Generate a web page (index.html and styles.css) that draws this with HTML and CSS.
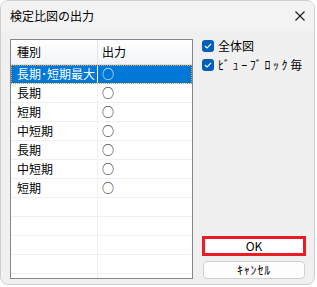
FILE: index.html
```html
<!DOCTYPE html>
<html>
<head>
    <meta charset="utf-8">
    <title>検定比図の出力</title>
    <link rel="stylesheet" href="styles.css">
</head>
<body>
    <div class="dialog">
        <div class="dialog-title">
            <span>検定比図の出力</span>
            <svg class="close" width="10" height="10" viewBox="0 0 10 10"><path d="M0.5 0.5L9.5 9.5M9.5 0.5L0.5 9.5" stroke="#1a1a1a" stroke-width="1.1"/></svg>
        </div>
        <div class="dialog-body">
            <div class="list">
                <div class="list-head">
                    <div class="col1">種別</div>
                    <div class="col2">出力</div>
                </div>
                <div class="list-rows">
                    <div class="row selected"><div class="col1">長期･短期最大</div><div class="col2">○</div></div>
                    <div class="row"><div class="col1">長期</div><div class="col2">○</div></div>
                    <div class="row"><div class="col1">短期</div><div class="col2">○</div></div>
                    <div class="row"><div class="col1">中短期</div><div class="col2">○</div></div>
                    <div class="row"><div class="col1">長期</div><div class="col2">○</div></div>
                    <div class="row"><div class="col1">中短期</div><div class="col2">○</div></div>
                    <div class="row"><div class="col1">短期</div><div class="col2">○</div></div>
                    <div class="row"><div class="col1"></div><div class="col2"></div></div>
                    <div class="row"><div class="col1"></div><div class="col2"></div></div>
                    <div class="row"><div class="col1"></div><div class="col2"></div></div>
                    <div class="row"><div class="col1"></div><div class="col2"></div></div>
                    <div class="row"><div class="col1"></div><div class="col2"></div></div>
                </div>
            </div>
            <div class="side">
                <label class="check"><span class="box"><svg width="8" height="6" viewBox="0 0 8 6"><path d="M0.8 3L3 5L7.2 0.8" fill="none" stroke="#fff" stroke-width="1.1"/></svg></span>全体図</label>
                <label class="check"><span class="box"><svg width="8" height="6" viewBox="0 0 8 6"><path d="M0.8 3L3 5L7.2 0.8" fill="none" stroke="#fff" stroke-width="1.1"/></svg></span><span class="kana">ﾋﾞｭｰﾌﾞﾛｯｸ</span>毎</label>
                <div class="buttons">
                    <button class="btn btn-ok">OK</button>
                    <button class="btn"><span class="kana-btn">ｷｬﾝｾﾙ</span></button>
                </div>
            </div>
        </div>
    </div>
</body>
</html>
```
FILE: styles.css
```css
* {
    margin: 0;
    padding: 0;
    box-sizing: border-box;
}

body {
    background: #ffffff;
    font-family: "Noto Sans CJK JP", "Liberation Sans", sans-serif;
    font-size: 12px;
    color: #000000;
}

.dialog {
    width: 315px;
    height: 285px;
    border: 1px solid #cfcfcf;
    border-radius: 8px;
    background: #f0f0f0;
    overflow: hidden;
    display: flex;
    flex-direction: column;
}

.dialog-title {
    flex-shrink: 0;
    height: 30px;
    background: #f3f3f3;
    display: flex;
    align-items: center;
    justify-content: space-between;
    padding: 0 9px 0 9px;
    line-height: 16px;
}

.dialog-title .close {
    margin-top: -1px;
}

.dialog-body {
    flex: 1;
    min-height: 0;
    display: flex;
    padding: 8px 8px 5px 9px;
    gap: 9px;
}

.list {
    width: 184px;
    border: 1px solid #828790;
    background: #ffffff;
    overflow: hidden;
}

.list-head {
    height: 25px;
    display: flex;
    background: linear-gradient(#ffffff, #f2f4f7);
    border-bottom: 1px solid #d5dde6;
    line-height: 24px;
}

.list-head .col1 {
    border-right: 1px solid #dfe6ee;
}

.col1 {
    width: 87px;
    padding-left: 6px;
    white-space: nowrap;
    overflow: hidden;
    border-right: 1px solid #f0f0f0;
}

.col2 {
    flex: 1;
    padding-left: 4px;
}

.row {
    height: 19px;
    display: flex;
    line-height: 18px;
    border-bottom: 1px solid #f0f0f0;
}

.row.selected {
    background: #0078d7;
    color: #ffffff;
    outline: 1px dotted #f0a030;
    outline-offset: -1px;
}

.row.selected .col1 {
    border-right: 1px solid #ffffff;
}

.side {
    width: 104px;
    display: flex;
    flex-direction: column;
}

.check {
    display: flex;
    align-items: center;
    height: 19px;
    line-height: 19px;
    margin-top: -3px;
    margin-bottom: 3px;
    white-space: nowrap;
}

.kana {
    letter-spacing: 2.6px;
}

.kana-btn {
    letter-spacing: 0.8px;
}

.box {
    width: 12px;
    height: 12px;
    border-radius: 3px;
    background: #005fb8;
    display: flex;
    align-items: center;
    justify-content: center;
    margin-right: 4px;
}

.buttons {
    margin-top: auto;
    display: flex;
    flex-direction: column;
    align-items: center;
    gap: 5px;
}

.btn {
    font-family: "Noto Sans CJK JP", "Liberation Sans", sans-serif;
    font-size: 12px;
    line-height: 16px;
    width: 102px;
    height: 18px;
    background: #fdfdfd;
    border: 1px solid #d0d0d0;
    border-radius: 4px;
    color: #000000;
}

.btn-ok {
    width: 104px;
    height: 20px;
    background: #ffffff;
    border: 3px solid #ec1c24;
    border-radius: 0;
    line-height: 14px;
}
```
